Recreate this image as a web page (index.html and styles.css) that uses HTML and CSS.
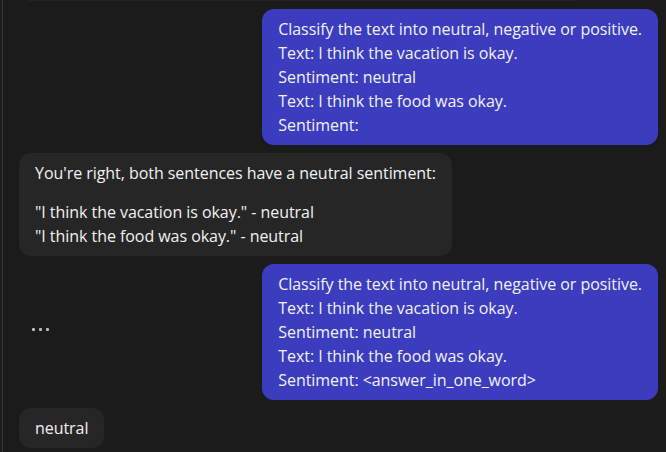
FILE: index.html
```html
<!DOCTYPE html>
<html>
<head>
<meta charset="utf-8">
<link rel="stylesheet" href="styles.css">
</head>
<body>
<div class="pane">
  <div class="chat">
    <div class="stub"></div>
    <div class="row row-user">
      <div class="bubble user">
        <p>Classify the text into neutral, negative or positive.<br>Text: I think the vacation is okay.<br>Sentiment: neutral<br>Text: I think the food was okay.<br>Sentiment:</p>
      </div>
    </div>
    <div class="row row-bot">
      <div class="bubble bot">
        <p>You're right, both sentences have a neutral sentiment:</p>
        <p>"I think the vacation is okay." - neutral<br>"I think the food was okay." - neutral</p>
      </div>
    </div>
    <div class="row row-split">
      <div class="typing"><span></span><span></span><span></span></div>
      <div class="bubble user">
        <p>Classify the text into neutral, negative or positive.<br>Text: I think the vacation is okay.<br>Sentiment: neutral<br>Text: I think the food was okay.<br>Sentiment: &lt;answer_in_one_word&gt;</p>
      </div>
    </div>
    <div class="row row-bot">
      <div class="bubble bot">
        <p>neutral</p>
      </div>
    </div>
  </div>
</div>
</body>
</html>
```
FILE: styles.css
```css
html, body {
  margin: 0;
  padding: 0;
  background: #1b1b1b;
  height: 100%;
  overflow: hidden;
}
.pane {
  margin-left: 2px;
  border-left: 1px solid #353535;
  height: 100%;
  font-family: "Open Sans", "Noto Sans", sans-serif;
  font-size: 16px;
  line-height: 24px;
  letter-spacing: -0.05px;
  color: #f2f2f2;
}
.chat {
  display: flex;
  flex-direction: column;
  gap: 8px;
  padding: 0 8px 0 16px;
}
.stub {
  height: 1px;
  margin-left: 9px;
  width: 550px;
  background: #232323;
}
.row {
  display: flex;
}
.row-user {
  justify-content: flex-end;
}
.row-bot {
  justify-content: flex-start;
}
.row-split {
  justify-content: space-between;
  align-items: center;
}
.bubble {
  border-radius: 12px;
  padding: 8px 16px;
}
.bubble p {
  margin: 0;
}
.bubble p + p {
  margin-top: 15px;
}
.user {
  background: #3c3cbe;
}
.bot {
  background: #262626;
}
.typing {
  display: flex;
  gap: 4px;
  margin-left: 13px;
  margin-bottom: 6px;
}
.typing span {
  width: 3px;
  height: 3px;
  background: #bdbdbd;
  border-radius: 1px;
}
```
